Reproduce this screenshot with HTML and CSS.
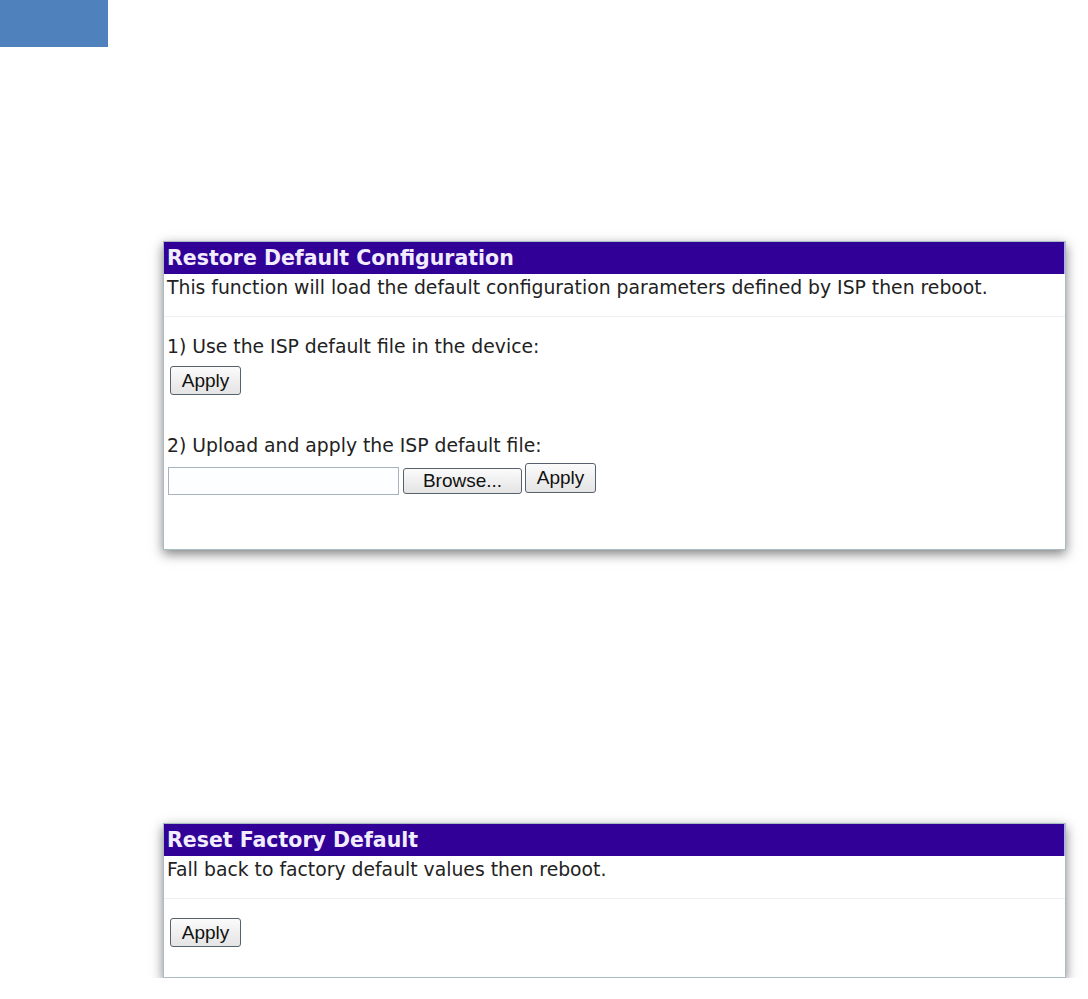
FILE: index.html
```html
<!DOCTYPE html>
<html lang="en">

<head>
    <meta charset="UTF-8">
    <title>Restore Default</title>
    <link rel="stylesheet" href="styles.css">
</head>

<body>
    <div class="corner"></div>

    <div class="panel panel-restore">
        <div class="panel-title">Restore Default Configuration</div>
        <div class="panel-desc">This function will load the default configuration parameters defined by ISP then reboot.</div>
        <div class="panel-body">
            <div class="step">1) Use the ISP default file in the device:</div>
            <button class="btn btn-apply">Apply</button>

            <div class="step step-second">2) Upload and apply the ISP default file:</div>
            <div class="file-row">
                <input type="text" class="file-name">
                <button class="btn btn-browse">Browse...</button>
                <button class="btn btn-apply btn-apply-up">Apply</button>
            </div>
        </div>
    </div>

    <div class="panel panel-reset">
        <div class="panel-title">Reset Factory Default</div>
        <div class="panel-desc">Fall back to factory default values then reboot.</div>
        <div class="panel-body">
            <button class="btn btn-apply">Apply</button>
        </div>
    </div>
</body>

</html>
```

FILE: styles.css
```css
body {
    margin: 0;
    background: #ffffff;
    font-family: "DejaVu Sans", Verdana, sans-serif;
    font-size: 18.8px;
    color: #222222;
}

.corner {
    width: 108px;
    height: 47px;
    background-color: #4f81bd;
}

.panel {
    width: 901px;
    margin-left: 163px;
    background: #ffffff;
    border: 1px solid #a9bcc4;
    box-shadow: 0 4px 11px rgba(0, 0, 0, 0.5);
}

.panel-restore {
    margin-top: 194px;
    height: 307px;
}

.panel-reset {
    margin-top: 273px;
    height: 153px;
}

.panel-title {
    height: 32px;
    line-height: 33px;
    padding-left: 3px;
    background-color: #310096;
    border-right: 1px solid #b8a8ff;
    color: #f2ecff;
    font-weight: bold;
    font-size: 20.5px;
}

.panel-desc {
    line-height: 28px;
    padding: 0 3px 14px;
    border-bottom: 1px solid #eeeeee;
}

.panel-body {
    padding: 16px 3px 0;
}

.step {
    line-height: 28px;
}

.step-second {
    margin-top: 37px;
}

.btn {
    font-family: "Liberation Sans", Arial, sans-serif;
    font-size: 19px;
    color: #111111;
    background: linear-gradient(#fbfbfb, #e4e4e4);
    border: 1px solid #55626e;
    border-radius: 3px;
    padding: 0;
    margin: 0;
    box-sizing: border-box;
}

.btn-apply {
    width: 71px;
    height: 29px;
    margin-top: 5px;
    margin-left: 3px;
}

.panel-reset .btn-apply {
    margin-top: 3px;
}

.file-row {
    display: flex;
    align-items: flex-start;
    margin-top: 3px;
}

.file-name {
    width: 231px;
    height: 28px;
    margin: 4px 0 0 1px;
    box-sizing: border-box;
    border: 1px solid #a7b3bd;
    background: #fdfeff;
}

.btn-browse {
    width: 119px;
    height: 26px;
    margin: 5px 0 0 4px;
}

.btn-apply-up {
    width: 71px;
    height: 30px;
    margin: 0 0 0 3px;
}
```
